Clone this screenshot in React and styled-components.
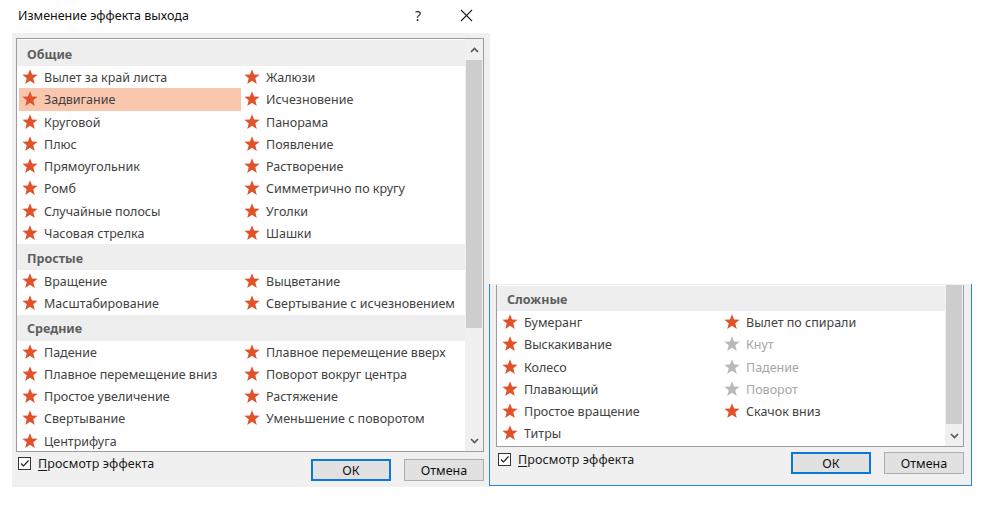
import React from 'react';
import styled, { createGlobalStyle } from 'styled-components';

const GlobalStyle = createGlobalStyle`
  html, body {
    margin: 0;
    padding: 0;
    background: #ffffff;
  }
  body {
    font-family: "Noto Sans", "Open Sans", sans-serif;
    color: #444;
  }
`;

const Page = styled.div`
  width: 1000px;
  height: 507px;
  display: flex;
  align-items: flex-start;
  overflow: hidden;
`;

const Dialog = styled.div`
  width: 490px;
  display: flex;
  flex-direction: column;
  flex-shrink: 0;
`;

const TitleBar = styled.div`
  height: 33px;
  display: flex;
  align-items: center;
  padding-left: 18px;
  box-sizing: border-box;
`;

const TitleText = styled.div`
  flex: 1;
  font-size: 12.5px;
  color: #111;
  margin-top: -3px;
`;

const TitleButton = styled.div`
  width: 48px;
  display: flex;
  justify-content: center;
  align-items: center;
  font-size: 14px;
  color: #222;
  margin-top: -3px;
`;

const Body = styled.div`
  margin-left: 12px;
  height: 454px;
  background: #f0f0f0;
  padding: 5px 6px 0 4px;
  box-sizing: border-box;
  display: flex;
  flex-direction: column;
`;

const SecondWindow = styled.div`
  width: 483px;
  height: 202px;
  margin-top: 284px;
  margin-left: -1px;
  flex-shrink: 0;
  border: 1px solid #2b87d6;
  border-top: none;
  box-sizing: border-box;
  background: #f0f0f0;
  padding: 1px 7px 0 6px;
  display: flex;
  flex-direction: column;
`;

const ListBox = styled.div`
  height: ${p => p.$height}px;
  border: 1px solid #9c9c9c;
  border-top: ${p => (p.$cropped ? 'none' : '1px solid #9c9c9c')};
  background: #fff;
  display: flex;
  box-sizing: border-box;
  overflow: hidden;
`;

const ListContent = styled.div`
  flex: 1;
  display: flex;
  flex-direction: column;
  padding-top: ${p => p.$top || 0}px;
`;

const GroupHeader = styled.div`
  height: ${p => p.$h || 26}px;
  flex-shrink: 0;
  background: #eeeeee;
  display: flex;
  align-items: center;
  padding-left: 10px;
  padding-top: 2px;
  box-sizing: border-box;
  font-size: 12.5px;
  font-weight: 700;
  color: #5e5e5e;
`;

const Grid = styled.div`
  display: grid;
  grid-template-columns: 222px 222px;
  grid-auto-rows: 22.25px;
  padding-left: 2px;
`;

const Item = styled.div`
  display: flex;
  align-items: center;
  padding: 1px 0 0 3px;
  box-sizing: border-box;
  gap: 6px;
  font-size: 12.5px;
  white-space: nowrap;
  color: ${p => (p.$disabled ? '#a6a6a6' : '#424242')};
  background: ${p => (p.$selected ? '#f9c7ae' : 'transparent')};

  svg {
    margin-top: -1px;
  }
`;

const Scrollbar = styled.div`
  width: 18px;
  flex-shrink: 0;
  background: #f0f0f0;
  display: flex;
  flex-direction: column;
  align-items: stretch;
`;

const ScrollArrow = styled.div`
  height: ${p => p.$h}px;
  display: flex;
  align-items: center;
  justify-content: center;
  flex-shrink: 0;
`;

const Thumb = styled.div`
  height: ${p => p.$h}px;
  background: #cdcdcd;
  margin: 0 1px;
  flex-shrink: 0;
`;

const Track = styled.div`
  flex: 1;
`;

const Footer = styled.div`
  flex: 1;
  display: flex;
  align-items: flex-start;
  padding-left: 2px;
`;

const Preview = styled.label`
  display: flex;
  align-items: center;
  gap: 7px;
  margin-top: ${p => p.$top}px;
  flex: 1;
  font-size: 12.5px;
  color: #1a1a1a;
  letter-spacing: 0.1px;

  u {
    text-decoration: underline;
    text-underline-offset: 2px;
  }
`;

const Box = styled.span`
  width: 13px;
  height: 13px;
  border: 1px solid #333;
  background: #fff;
  box-sizing: border-box;
  display: flex;
  align-items: center;
  justify-content: center;
`;

const Buttons = styled.div`
  display: flex;
  gap: 13px;
  margin-top: ${p => p.$top}px;
`;

const Button = styled.button`
  width: 80px;
  height: 22px;
  box-sizing: border-box;
  background: #e1e1e1;
  border: ${p => (p.$default ? '2px solid #0a78d4' : '1px solid #adadad')};
  font-family: inherit;
  font-size: 12.5px;
  color: #111;
  padding: 0;
  display: flex;
  align-items: center;
  justify-content: center;
`;

const Star = ({ muted }) => (
  <svg width="16" height="16" viewBox="0 0 24 24">
    <polygon
      points="12,0.5 15.1,8.4 23.5,8.7 16.9,13.9 19.2,22.5 12,17.6 4.8,22.5 7.1,13.9 0.5,8.7 8.9,8.4"
      fill={muted ? '#b9b9b9' : '#e0522a'}
    />
  </svg>
);

const Chevron = ({ down }) => (
  <svg width="9" height="6" viewBox="0 0 9 6">
    <polyline
      points={down ? '1,1 4.5,4.5 8,1' : '1,5 4.5,1.5 8,5'}
      fill="none"
      stroke="#555"
      strokeWidth="1.6"
    />
  </svg>
);

const CheckBox = () => (
  <Box>
    <svg width="11" height="11" viewBox="0 0 11 11">
      <polyline points="2,5.5 4.5,8 9.5,2.5" fill="none" stroke="#222" strokeWidth="1.2" />
    </svg>
  </Box>
);

const groups = [
  {
    title: 'Общие',
    items: [
      ['Вылет за край листа', 'Жалюзи'],
      ['Задвигание', 'Исчезновение'],
      ['Круговой', 'Панорама'],
      ['Плюс', 'Появление'],
      ['Прямоугольник', 'Растворение'],
      ['Ромб', 'Симметрично по кругу'],
      ['Случайные полосы', 'Уголки'],
      ['Часовая стрелка', 'Шашки'],
    ],
  },
  {
    title: 'Простые',
    items: [
      ['Вращение', 'Выцветание'],
      ['Масштабирование', 'Свертывание с исчезновением'],
    ],
  },
  {
    title: 'Средние',
    items: [
      ['Падение', 'Плавное перемещение вверх'],
      ['Плавное перемещение вниз', 'Поворот вокруг центра'],
      ['Простое увеличение', 'Растяжение'],
      ['Свертывание', 'Уменьшение с поворотом'],
      ['Центрифуга', null],
    ],
  },
];

const complex = [
  ['Бумеранг', 'Вылет по спирали'],
  ['Выскакивание', { name: 'Кнут', disabled: true }],
  ['Колесо', { name: 'Падение', disabled: true }],
  ['Плавающий', { name: 'Поворот', disabled: true }],
  ['Простое вращение', 'Скачок вниз'],
  ['Титры', null],
];

function Effect({ value, selected }) {
  if (!value) return <div />;
  const name = typeof value === 'string' ? value : value.name;
  const disabled = typeof value === 'object' && value.disabled;
  return (
    <Item $selected={selected} $disabled={disabled}>
      <Star muted={disabled} />
      {name}
    </Item>
  );
}

function Rows({ rows, selected }) {
  return (
    <Grid>
      {rows.map(([a, b]) => (
        <React.Fragment key={a}>
          <Effect value={a} selected={a === selected} />
          <Effect value={b} selected={b === selected} />
        </React.Fragment>
      ))}
    </Grid>
  );
}

function DialogFooter({ boxTop, buttonTop }) {
  return (
    <Footer>
      <Preview $top={boxTop}>
        <CheckBox />
        <span>
          <u>П</u>росмотр эффекта
        </span>
      </Preview>
      <Buttons $top={buttonTop}>
        <Button $default>ОК</Button>
        <Button>Отмена</Button>
      </Buttons>
    </Footer>
  );
}

export default function App() {
  return (
    <>
      <GlobalStyle />
      <Page>
        <Dialog>
          <TitleBar>
            <TitleText>Изменение эффекта выхода</TitleText>
            <TitleButton>?</TitleButton>
            <TitleButton>
              <svg width="13" height="13" viewBox="0 0 13 13">
                <path d="M1 1 L12 12 M12 1 L1 12" stroke="#222" strokeWidth="1.1" />
              </svg>
            </TitleButton>
          </TitleBar>
          <Body>
            <ListBox $height={414}>
              <ListContent $top={1}>
                {groups.map(g => (
                  <React.Fragment key={g.title}>
                    <GroupHeader>{g.title}</GroupHeader>
                    <Rows rows={g.items} selected="Задвигание" />
                  </React.Fragment>
                ))}
              </ListContent>
              <Scrollbar>
                <ScrollArrow $h={21}>
                  <Chevron />
                </ScrollArrow>
                <Thumb $h={268} />
                <Track />
                <ScrollArrow $h={20}>
                  <Chevron down />
                </ScrollArrow>
              </Scrollbar>
            </ListBox>
            <DialogFooter boxTop={3} buttonTop={7} />
          </Body>
        </Dialog>

        <SecondWindow>
          <ListBox $height={162} $cropped>
            <ListContent $top={1}>
              <GroupHeader $h={25}>Сложные</GroupHeader>
              <Rows rows={complex} />
            </ListContent>
            <Scrollbar>
              <Thumb $h={139} />
              <Track />
              <ScrollArrow $h={20}>
                <Chevron down />
              </ScrollArrow>
            </Scrollbar>
          </ListBox>
          <DialogFooter boxTop={4} buttonTop={5} />
        </SecondWindow>
      </Page>
    </>
  );
}
